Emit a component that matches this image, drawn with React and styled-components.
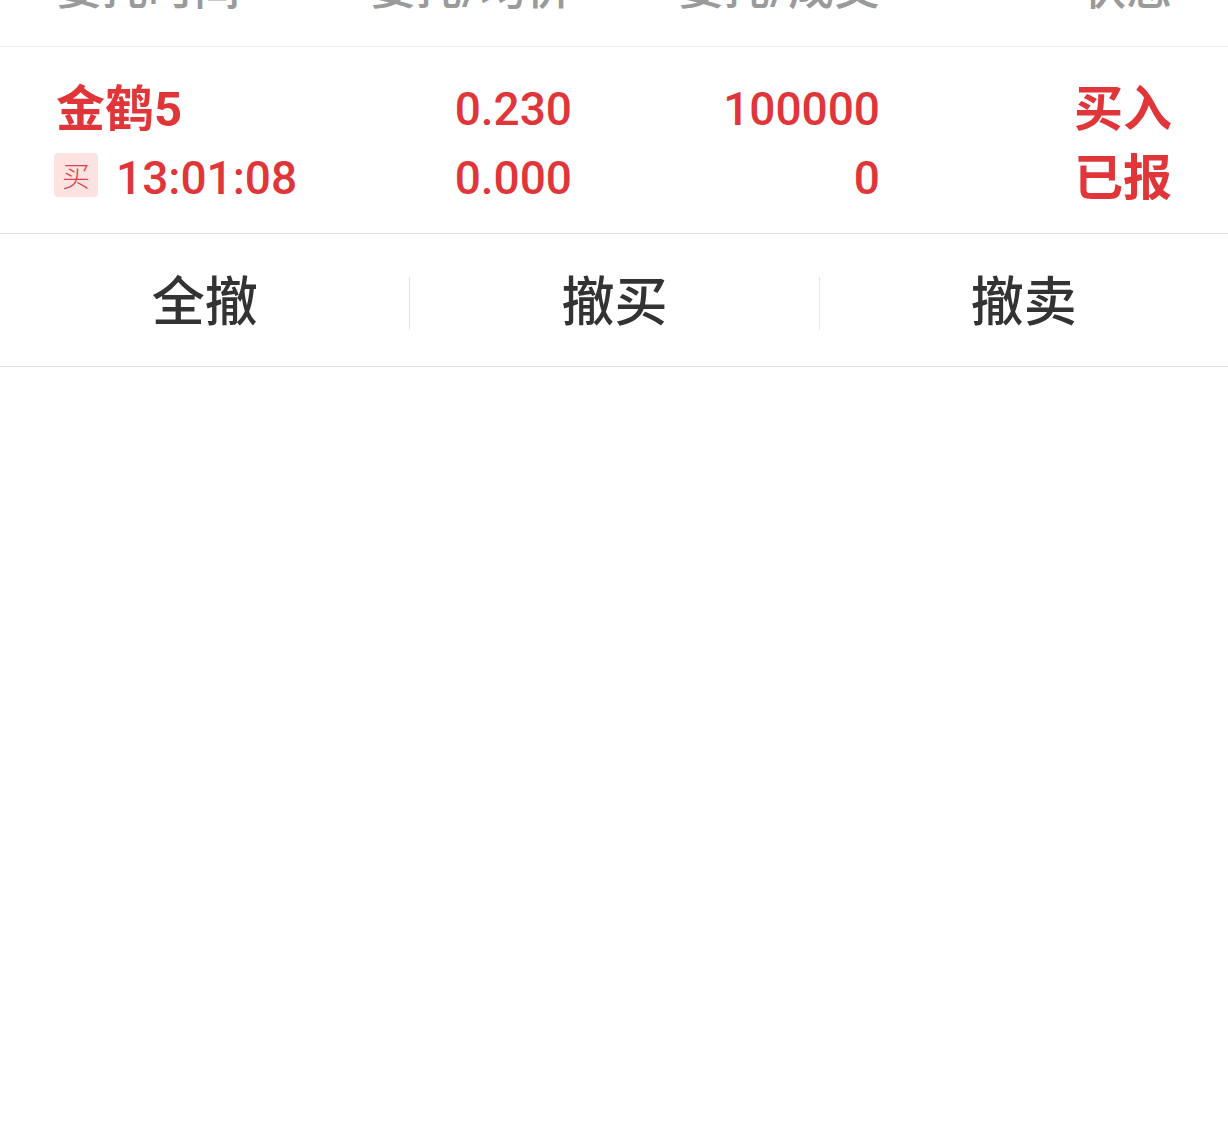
import React from 'react';
import styled, { createGlobalStyle } from 'styled-components';

const GlobalStyle = createGlobalStyle`
  html, body {
    margin: 0;
    padding: 0;
    background: #fff;
  }
  body {
    font-family: Roboto, "Noto Sans CJK SC", "Noto Sans", sans-serif;
  }
`;

const RED = '#e0363a';

const Page = styled.div`
  width: 1228px;
  min-height: 1136px;
  background: #fff;
`;

const Columns = styled.div`
  display: grid;
  grid-template-columns: 1fr 216px 308px 292px;
  padding: 0 56px;
`;

const HeaderBar = styled(Columns)`
  height: 47px;
  align-items: end;
  align-content: end;
  padding-bottom: 35px;
  box-sizing: border-box;
  overflow: hidden;
  border-bottom: 1px solid #ececec;
`;

const HeaderCell = styled.div`
  font-size: 46px;
  line-height: 46px;
  font-weight: 500;
  color: #9a9a9a;
  white-space: nowrap;
  text-align: ${(p) => (p.$left ? 'left' : 'right')};
`;

const OrderRow = styled(Columns)`
  padding-top: 34px;
  padding-bottom: 27px;
  border-bottom: 1px solid #e2e2e2;
`;

const Cell = styled.div`
  display: flex;
  flex-direction: column;
  gap: 13px;
  align-items: ${(p) => (p.$left ? 'flex-start' : 'flex-end')};
`;

const Line = styled.div`
  display: flex;
  align-items: center;
  height: 56px;
  box-sizing: border-box;
  padding-bottom: ${(p) => (p.$bold ? '9px' : '0')};
  font-size: ${(p) => (p.$bold ? '49px' : '46px')};
  font-weight: ${(p) => (p.$bold ? 700 : 500)};
  color: ${RED};
  white-space: nowrap;
`;

const Badge = styled.span`
  display: inline-flex;
  align-items: center;
  justify-content: center;
  width: 44px;
  height: 44px;
  border-radius: 4px;
  background: #fde2e2;
  color: #d9454a;
  font-size: 28px;
  font-weight: 300;
  margin: 0 18px 6px -2px;
`;

const ActionBar = styled.div`
  display: grid;
  grid-template-columns: repeat(3, 1fr);
  align-items: center;
  height: 133px;
  padding-top: 6px;
  box-sizing: border-box;
  border-bottom: 1px solid #e2e2e2;
`;

const ActionButton = styled.button`
  border: none;
  background: transparent;
  height: 53px;
  padding: 0 0 0 0;
  font-family: inherit;
  font-size: 53px;
  line-height: 53px;
  font-weight: 500;
  color: #333;
  cursor: pointer;
  border-left: ${(p) => (p.$divider ? '1px solid #e6e6e6' : 'none')};
`;

const order = {
  name: '金鹤5',
  side: '买',
  time: '13:01:08',
  price: '0.230',
  avgPrice: '0.000',
  qty: '100000',
  filled: '0',
  action: '买入',
  status: '已报',
};

const App = () => (
  <Page>
    <GlobalStyle />
    <HeaderBar>
      <HeaderCell $left>委托时间</HeaderCell>
      <HeaderCell>委托/均价</HeaderCell>
      <HeaderCell>委托/成交</HeaderCell>
      <HeaderCell>状态</HeaderCell>
    </HeaderBar>

    <OrderRow>
      <Cell $left>
        <Line $bold>{order.name}</Line>
        <Line>
          <Badge>{order.side}</Badge>
          {order.time}
        </Line>
      </Cell>
      <Cell>
        <Line>{order.price}</Line>
        <Line>{order.avgPrice}</Line>
      </Cell>
      <Cell>
        <Line>{order.qty}</Line>
        <Line>{order.filled}</Line>
      </Cell>
      <Cell>
        <Line $bold>{order.action}</Line>
        <Line $bold>{order.status}</Line>
      </Cell>
    </OrderRow>

    <ActionBar>
      <ActionButton>全撤</ActionButton>
      <ActionButton $divider>撤买</ActionButton>
      <ActionButton $divider>撤卖</ActionButton>
    </ActionBar>
  </Page>
);

export default App;
